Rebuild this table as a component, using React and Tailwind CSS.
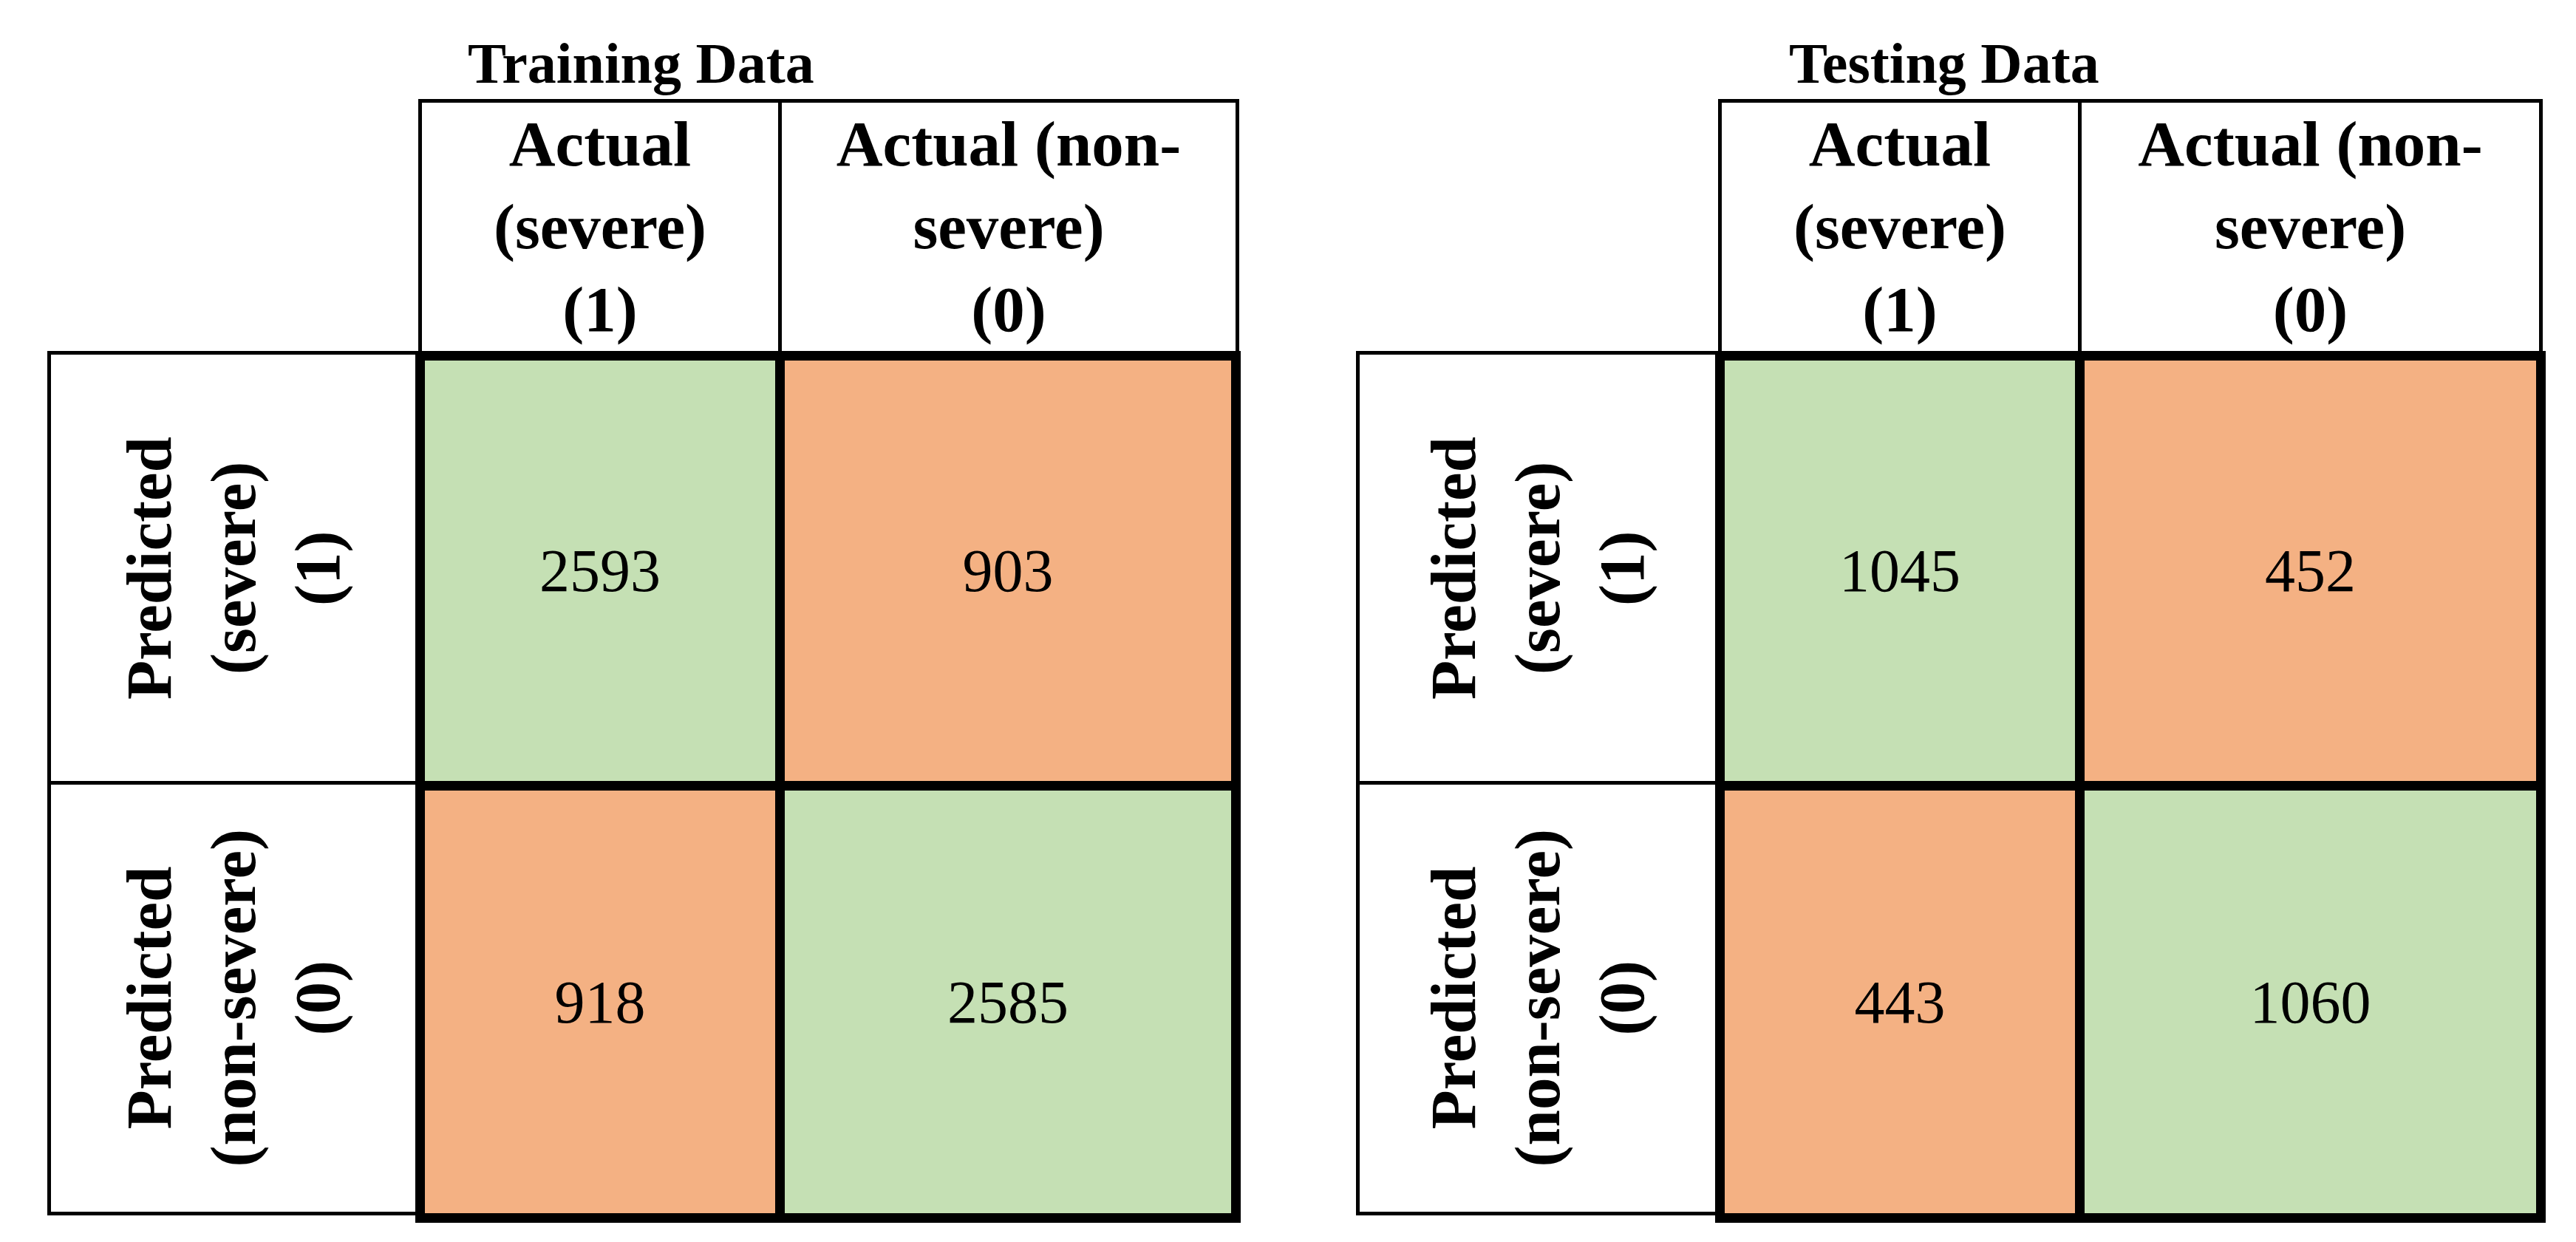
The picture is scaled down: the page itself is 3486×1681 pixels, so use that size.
import React from "react";

const GREEN = "bg-[#c5e0b4]";
const ORANGE = "bg-[#f4b183]";

const matrices = [
  {
    title: "Training Data",
    titleOffset: "ml-[569px]",
    labelWidth: "w-[498px]",
    headerOffset: "ml-[502px]",
    headerWidth: "w-[1111px]",
    gridWidth: "w-[1117px]",
    gridCols: "grid-cols-[474px_604px]",
    cells: [
      { value: 2593, color: GREEN },
      { value: 903, color: ORANGE },
      { value: 918, color: ORANGE },
      { value: 2585, color: GREEN },
    ],
  },
  {
    title: "Testing Data",
    titleOffset: "ml-[586px]",
    labelWidth: "w-[486px]",
    headerOffset: "ml-[490px]",
    headerWidth: "w-[1116px]",
    gridWidth: "w-[1124px]",
    gridCols: "grid-cols-[474px_611px]",
    cells: [
      { value: 1045, color: GREEN },
      { value: 452, color: ORANGE },
      { value: 443, color: ORANGE },
      { value: 1060, color: GREEN },
    ],
  },
];

function RowLabel({ lines, className }) {
  return (
    <div className={`flex items-center justify-center border-l-[5px] border-black ${className}`}>
      <div className="[writing-mode:vertical-rl] rotate-180 text-center text-[87px] leading-[114px] font-bold">
        {lines.map((l) => (
          <div key={l}>{l}</div>
        ))}
      </div>
    </div>
  );
}

function HeaderCell({ lines, className }) {
  return (
    <div className={`flex flex-col items-center justify-center text-[87px] leading-[112px] font-bold ${className}`}>
      {lines.map((l) => (
        <div key={l}>{l}</div>
      ))}
    </div>
  );
}

function Matrix({ m }) {
  return (
    <div className="flex flex-col">
      <div className={`h-[134px] pt-[47px] text-[78px] leading-[78px] font-bold whitespace-nowrap ${m.titleOffset}`}>
        {m.title}
      </div>

      {/* column headers */}
      <div className={`flex h-[341px] border-t-[5px] border-l-[5px] border-r-[5px] border-black ${m.headerOffset} ${m.headerWidth}`}>
        <HeaderCell lines={["Actual", "(severe)", "(1)"]} className="w-[487px] border-r-[5px] border-black" />
        <HeaderCell lines={["Actual (non-", "severe)", "(0)"]} className="flex-1" />
      </div>

      <div className="flex items-start">
        <div className={`flex flex-col ${m.labelWidth}`}>
          <RowLabel lines={["Predicted", "(severe)", "(1)"]} className="h-[587px] border-t-[5px] border-b-[5px]" />
          <RowLabel lines={["Predicted", "(non-severe)", "(0)"]} className="h-[583px] border-b-[5px]" />
        </div>
        <div className={`grid ${m.gridCols} grid-rows-[569px_572px] gap-[13px] p-[13px] bg-black ${m.gridWidth}`}>
          {m.cells.map((c, i) => (
            <div key={i} className={`flex items-center justify-center text-[82px] ${c.color}`}>
              {c.value}
            </div>
          ))}
        </div>
      </div>
    </div>
  );
}

export default function App() {
  return (
    <div className="w-[3486px] h-[1681px] bg-white text-black font-['Liberation_Serif',serif] flex gap-[156px] pl-[64px] overflow-hidden">
      {matrices.map((m) => (
        <Matrix key={m.title} m={m} />
      ))}
    </div>
  );
}
